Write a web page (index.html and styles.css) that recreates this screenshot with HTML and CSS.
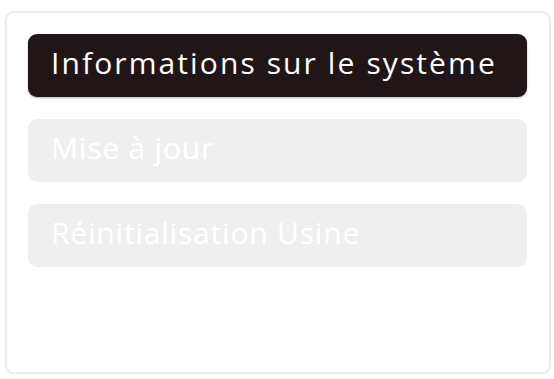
FILE: index.html
```html
<!DOCTYPE html>
<html lang="fr">
<head>
<meta charset="utf-8">
<link rel="stylesheet" href="styles.css">
</head>
<body>
<div class="card">
  <div class="menu">
    <div class="item active">Informations sur le système</div>
    <div class="item">Mise à jour</div>
    <div class="item">Réinitialisation Usine</div>
  </div>
</div>
</body>
</html>
```
FILE: styles.css
```css
html, body {
  margin: 0;
  padding: 0;
  background: #ffffff;
}
body {
  padding: 11px 3px 0 5px;
  font-family: "Open Sans", "Noto Sans", sans-serif;
}
.card {
  box-sizing: border-box;
  width: 546px;
  height: 363px;
  border: 2px solid #ebebeb;
  border-radius: 9px;
  box-shadow: 0 1px 2px rgba(0,0,0,0.06);
  padding: 21px 22px 0 21px;
  background: #fff;
}
.menu {
  display: flex;
  flex-direction: column;
  gap: 22px;
}
.item {
  box-sizing: border-box;
  height: 63px;
  border-radius: 9px;
  background: #efefef;
  color: #ffffff;
  font-size: 30px;
  letter-spacing: 0.8px;
  display: flex;
  align-items: center;
  padding-left: 23px;
  padding-bottom: 7px;
}
.item.active {
  background: #211617;
  letter-spacing: 2.1px;
  box-shadow: 0 1px 2px rgba(0,0,0,0.3);
}
```
